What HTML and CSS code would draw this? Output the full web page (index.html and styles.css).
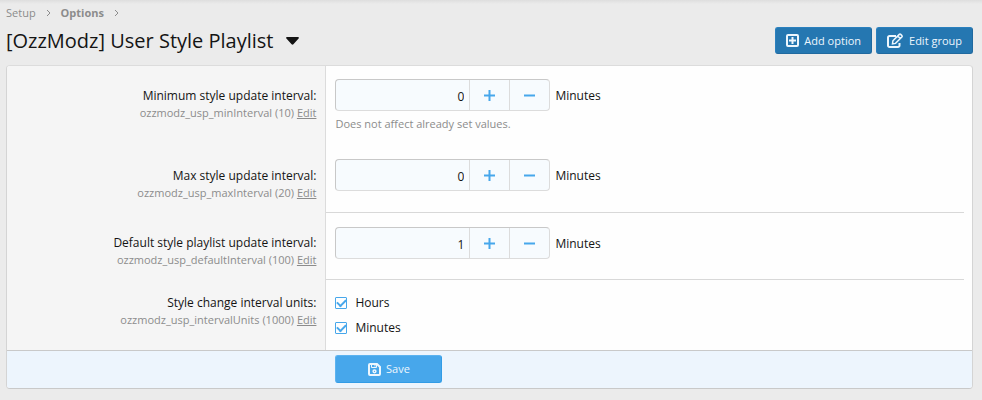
FILE: index.html
```html
<!DOCTYPE html>
<html lang="en">

<head>
    <meta charset="UTF-8">
    <meta name="viewport" content="width=device-width, initial-scale=1.0">
    <title>[OzzModz] User Style Playlist</title>
    <link rel="stylesheet" href="styles.css">
</head>

<body>
    <nav class="breadcrumbs">
        <a href="#">Setup</a>
        <svg class="chevron" viewBox="0 0 5 8"><path d="M1 1l3 3-3 3" /></svg>
        <a href="#" class="current">Options</a>
        <svg class="chevron" viewBox="0 0 5 8"><path d="M1 1l3 3-3 3" /></svg>
    </nav>

    <header class="header">
        <h1 class="title">[OzzModz] User Style Playlist
            <svg class="caret" viewBox="0 0 13 8"><path d="M1.2 0h10.6c1 0 1.4 1 .8 1.6L7.4 7.2c-.5.6-1.3.6-1.8 0L.4 1.6C-.2 1 .2 0 1.2 0z" /></svg>
        </h1>
        <div class="actions">
            <a href="#" class="button">
                <svg class="icon" viewBox="0 0 13 13"><rect x="1" y="1" width="11" height="11" rx="1" /><path d="M6.5 3v7M3 6.5h7" /></svg>
                Add option
            </a>
            <a href="#" class="button">
                <svg class="icon wide" viewBox="0 0 17 15"><path d="M9 3H2.5A1.5 1.5 0 0 0 1 4.5v8A1.5 1.5 0 0 0 2.5 14H11a1.5 1.5 0 0 0 1.5-1.5V10" /><path class="pencil" d="M5.5 10.8l.4-3L12.3 1.4c.4-.4 1-.4 1.4 0l1.2 1.2c.4.4.4 1 0 1.4L8.5 10.4zM10.7 3l2.6 2.6" /></svg>
                Edit group
            </a>
        </div>
    </header>

    <form class="panel">
        <div class="row">
            <div class="label">
                <label for="minInterval">Minimum style update interval:</label>
                <div class="hint">ozzmodz_usp_minInterval (10) <a href="#">Edit</a></div>
            </div>
            <div class="field">
                <div class="inputs">
                    <div class="number">
                        <input type="text" inputmode="numeric" id="minInterval" value="0">
                        <button type="button" aria-label="Increase"><svg viewBox="0 0 11 11"><path d="M5.5 0v11M0 5.5h11" /></svg></button>
                        <button type="button" aria-label="Decrease"><svg viewBox="0 0 11 11"><path d="M0 5.5h11" /></svg></button>
                    </div>
                    <span class="unit">Minutes</span>
                </div>
                <div class="explain">Does not affect already set values.</div>
            </div>
        </div>

        <div class="row">
            <div class="label">
                <label for="maxInterval">Max style update interval:</label>
                <div class="hint">ozzmodz_usp_maxInterval (20) <a href="#">Edit</a></div>
            </div>
            <div class="field">
                <div class="inputs">
                    <div class="number">
                        <input type="text" inputmode="numeric" id="maxInterval" value="0">
                        <button type="button" aria-label="Increase"><svg viewBox="0 0 11 11"><path d="M5.5 0v11M0 5.5h11" /></svg></button>
                        <button type="button" aria-label="Decrease"><svg viewBox="0 0 11 11"><path d="M0 5.5h11" /></svg></button>
                    </div>
                    <span class="unit">Minutes</span>
                </div>
            </div>
        </div>

        <div class="row separated">
            <div class="label">
                <label for="defaultInterval">Default style playlist update interval:</label>
                <div class="hint">ozzmodz_usp_defaultInterval (100) <a href="#">Edit</a></div>
            </div>
            <div class="field">
                <div class="inputs">
                    <div class="number">
                        <input type="text" inputmode="numeric" id="defaultInterval" value="1">
                        <button type="button" aria-label="Increase"><svg viewBox="0 0 11 11"><path d="M5.5 0v11M0 5.5h11" /></svg></button>
                        <button type="button" aria-label="Decrease"><svg viewBox="0 0 11 11"><path d="M0 5.5h11" /></svg></button>
                    </div>
                    <span class="unit">Minutes</span>
                </div>
            </div>
        </div>

        <div class="row separated units" role="group" aria-labelledby="intervalUnits">
            <div class="label">
                <span id="intervalUnits">Style change interval units:</span>
                <div class="hint">ozzmodz_usp_intervalUnits (1000) <a href="#">Edit</a></div>
            </div>
            <div class="field choices">
                <label class="choice"><input type="checkbox" checked> Hours</label>
                <label class="choice"><input type="checkbox" checked> Minutes</label>
            </div>
        </div>

        <div class="submit">
            <button type="submit" class="button save">
                <svg class="icon" viewBox="0 0 13 13"><path d="M2 1h7l3 3v7a1 1 0 0 1-1 1H2a1 1 0 0 1-1-1V2a1 1 0 0 1 1-1z" /><path class="thin" d="M3.5 1v3.5h5V1M7 2v1.5" /><circle class="dot" cx="6.5" cy="8.3" r="1.4" /></svg>
                Save
            </button>
        </div>
    </form>
</body>

</html>
```
FILE: styles.css
```css
* {
    box-sizing: border-box;
}

body {
    margin: 0;
    padding: 4px 9px 11px 6px;
    background: linear-gradient(#dedede, #ebebeb 4px) no-repeat #ebebeb;
    color: #141414;
    font: 12px/18px "Open Sans", "Noto Sans", sans-serif;
}

a {
    color: inherit;
}

svg {
    fill: none;
    stroke: currentColor;
}

.breadcrumbs {
    display: flex;
    align-items: center;
    gap: 10px;
    color: #8c8c8c;
    font-size: 11px;
}

.breadcrumbs a {
    text-decoration: none;
}

.breadcrumbs .current {
    font-weight: 700;
}

.chevron {
    width: 5px;
    height: 8px;
}

.header {
    display: flex;
    align-items: center;
    justify-content: space-between;
    padding: 5px 0 11px;
}

.title {
    display: flex;
    align-items: center;
    gap: 12px;
    margin: 0;
    font-size: 20px;
    font-weight: 400;
    line-height: 27px;
}

.caret {
    width: 13px;
    height: 8px;
    fill: currentColor;
    stroke: none;
}

.actions {
    display: flex;
    gap: 4px;
}

.button {
    display: flex;
    align-items: center;
    justify-content: center;
    gap: 5px;
    height: 27px;
    padding: 0 10px;
    border: 1px solid;
    border-color: #2a80be #20699f #20699f #2a80be;
    border-radius: 3px;
    background: #2577b1;
    color: #edf6fd;
    font: inherit;
    font-size: 11px;
    text-decoration: none;
}

.icon {
    width: 13px;
    height: 13px;
    stroke-width: 2;
}

.icon.wide {
    width: 17px;
    height: 15px;
}

.icon .pencil {
    fill: #2577b1;
    stroke-width: 1.5;
}

.icon .thin {
    stroke-width: 1;
}

.icon .dot {
    stroke-width: 1.5;
}

.panel {
    overflow: hidden;
    border: 1px solid;
    border-color: #dcdcdc #d4d4d4 #c9c9c9 #d4d4d4;
    border-radius: 4px;
    background: #fefefe;
}

.row {
    display: grid;
    grid-template-columns: calc(33% + 1px) 1fr;
}

.label {
    padding: 21px 9px 12px;
    border-right: 1px solid #dcdcdc;
    background: #f5f5f5;
    text-align: right;
}

.separated .label {
    padding-top: 22px;
}

.units .label {
    padding-top: 15px;
}

.hint {
    color: #8c8c8c;
    font-size: 11px;
    line-height: 15px;
}

.field {
    margin-right: 8px;
    padding: 13px 0 13px 9px;
}

.separated .field {
    padding-top: 14px;
    border-top: 1px solid #d8d8d8;
}

.inputs {
    display: flex;
    align-items: center;
    gap: 5px;
}

.unit {
    padding-top: 2px;
}

.number {
    display: flex;
    width: 215px;
    height: 32px;
    overflow: hidden;
    border: 1px solid;
    border-color: #c8c8c8 #dcdcdc #dcdcdc #c8c8c8;
    border-radius: 4px;
    background: #f7fbfe;
}

.number input {
    flex: 1;
    min-width: 0;
    padding: 3px 5px 0;
    border: 0;
    background: none;
    color: inherit;
    font: inherit;
    text-align: right;
}

.number button {
    display: flex;
    align-items: center;
    justify-content: center;
    width: 40px;
    padding: 0;
    border: 0;
    border-left: 1px solid #dcdcdc;
    background: none;
    color: #47a7eb;
}

.number svg {
    width: 11px;
    height: 11px;
    stroke-width: 2;
}

.explain {
    padding-top: 4px;
    color: #8c8c8c;
    font-size: 11px;
}

.choices {
    display: flex;
    flex-direction: column;
    gap: 7px;
}

.choice {
    display: flex;
    align-items: center;
    gap: 8px;
}

.choice input {
    appearance: none;
    display: grid;
    place-items: center;
    width: 12px;
    height: 12px;
    margin: 0;
    border: 1px solid #47a7eb;
    border-radius: 1px;
}

.choice input:checked::before {
    content: "";
    width: 7px;
    height: 4px;
    margin-bottom: 2px;
    border: solid #47a7eb;
    border-width: 0 0 2px 2px;
    transform: rotate(-45deg);
}

.submit {
    padding: 4px 0 5px calc(33% + 10px);
    border-top: 1px solid #c9c9c9;
    background: #edf5fd;
}

.button.save {
    width: 107px;
    height: 28px;
    border-color: #5cb3f0 #329ce6 #329ce6 #5cb3f0;
    background: #47a7eb;
}
```
